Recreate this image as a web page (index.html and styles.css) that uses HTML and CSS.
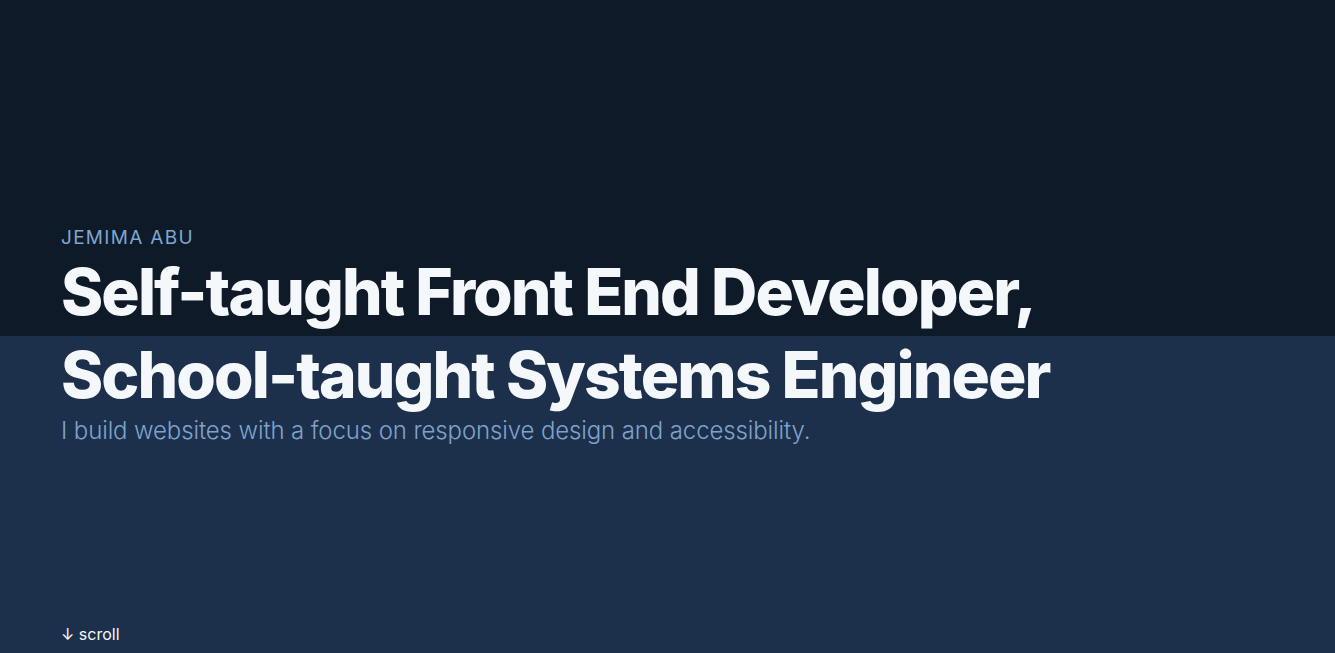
FILE: index.html
```html
<!DOCTYPE html>
<html lang="en">
<head>
<meta charset="utf-8">
<title>Jemima Abu</title>
<link rel="stylesheet" href="styles.css">
</head>
<body>
<header class="hero">
  <div class="hero-content">
    <p class="eyebrow">JEMIMA ABU</p>
    <h1 class="title">Self-taught Front End Developer,<br>School-taught Systems Engineer</h1>
    <p class="lead">I build websites with a focus on responsive design and accessibility.</p>
  </div>
  <a class="scroll" href="#about">↓ scroll</a>
</header>
</body>
</html>
```

FILE: styles.css
```css
* { box-sizing: border-box; }
html, body { margin: 0; padding: 0; }
body {
  font-family: Inter, "Noto Sans", sans-serif;
  background: #1c304b;
  color: #f5f8fb;
}
.hero {
  height: 653px;
  background: linear-gradient(to bottom, #0f1a28 0, #0f1a28 336px, #1c304b 336px, #1c304b 100%);
  padding: 0 61px;
  display: flex;
  flex-direction: column;
}
.hero-content {
  padding-top: 226px;
  flex: 1;
}
.eyebrow {
  margin: 0;
  font-size: 19px;
  line-height: 24px;
  letter-spacing: 1.3px;
  color: #7ea7d0;
  font-weight: 400;
}
.title {
  margin: 0;
  font-size: 64px;
  line-height: 83px;
  font-weight: 800;
  letter-spacing: -1.9px;
  color: #f5f8fb;
}
.lead {
  margin: 0;
  font-size: 24px;
  line-height: 30px;
  font-weight: 300;
  letter-spacing: -0.12px;
  color: #7fa3cc;
}
.scroll {
  color: #f5f8fb;
  text-decoration: none;
  font-size: 16px;
  line-height: 20px;
  margin-bottom: 9px;
  align-self: flex-start;
}
```
